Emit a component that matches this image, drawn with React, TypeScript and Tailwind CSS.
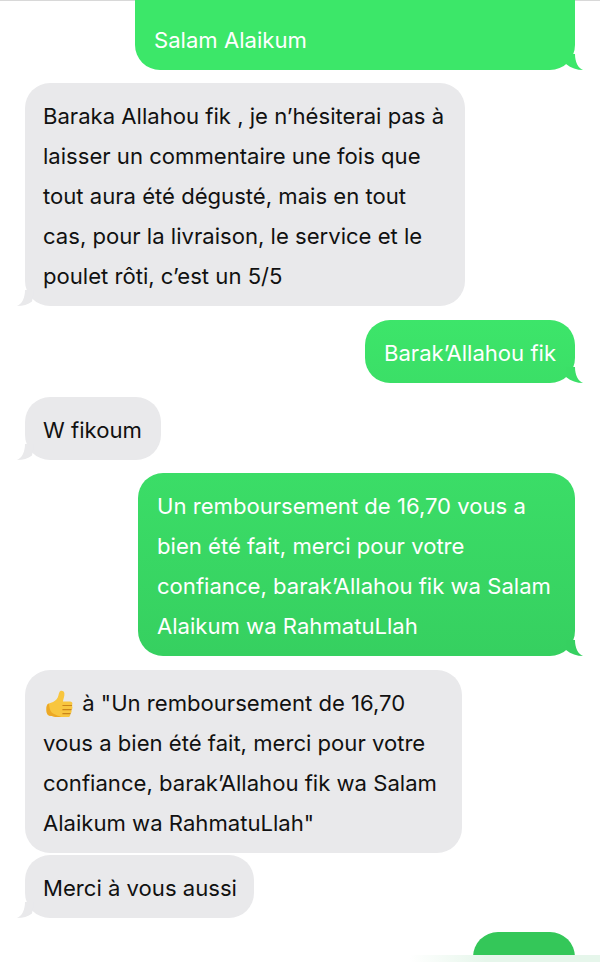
const font = { fontFamily: '"Inter", "Liberation Sans", sans-serif' }

function TailRight({ color }: { color: string }) {
  return (
    <svg className="absolute -right-[8px] bottom-0" width="20" height="16" viewBox="0 0 20 16">
      <path d="M12 0 C12 8 15 14 20 16 C14 16 8 14 3 10 L3 0 Z" fill={color} />
    </svg>
  )
}

function TailLeft() {
  return (
    <svg className="absolute -left-[8px] bottom-0" width="20" height="16" viewBox="0 0 20 16">
      <path d="M8 0 C8 8 5 14 0 16 C6 16 11 14.500 15 11.500 L17 0 Z" fill="#e9e9eb" />
    </svg>
  )
}

function Thumb() {
  return (
    <span className="inline-block w-[32px] h-[30px] ml-[1px] align-[-7px]">
      <svg width="31" height="33" viewBox="0 0 32 32">
        <path
          d="M5 15 C8 14 11 13 13 10.500 C15 8 15 5 16 3 C17 1 20.500 1.500 21 4 C21.500 7 20 10 19.500 13 L27 13 C29.500 13 30 16 28.500 17 C30 18.500 29.500 21 28 21.500 C29 23 28.500 25 27 25.500 C27.500 27.500 26.500 29 24.500 29 L14 29 C11 29 9 27.500 6 27.500 C3.500 27.500 2.500 25 2.500 21 C2.500 18 3 15.500 5 15 Z"
          fill="#f8c63f"
        />
        <path d="M5 15 C3 15.500 2.500 18 2.500 21 C2.500 25 3.500 27.500 6 27.500 C9 27.500 11 29 14 29 L18 29 C13 27 8 26 6.500 22 C5.500 19.500 5.500 17 5 15 Z" fill="#eca826" />
        <path d="M19.500 17 H28.500 M19.500 21.300 H28 M19.500 25.500 H27" stroke="#c9851a" strokeWidth="1.200" fill="none" strokeLinecap="round" />
      </svg>
    </span>
  )
}

type BubbleProps = {
  lines: React.ReactNode[]
  width: string
  tail?: boolean
  color?: string
  className?: string
}

function Sent({ lines, width, color = '#3bdf68', className = '' }: BubbleProps) {
  return (
    <div className={`relative self-end rounded-[25px] pt-[12.500px] pb-[10.500px] pl-[19px] text-white ${width} ${className}`}>
      <TailRight color={color} />
      {lines.map((l, i) => (
        <div key={i} className="relative whitespace-nowrap h-[40px] leading-[40px]">{l}</div>
      ))}
    </div>
  )
}

function Received({ lines, width, tail = true, className = '' }: BubbleProps) {
  return (
    <div className={`relative self-start rounded-[25px] bg-[#e9e9eb] pt-[12.500px] pb-[10.500px] pl-[18px] text-[#111111] ${width} ${className}`}>
      {tail && <TailLeft />}
      {lines.map((l, i) => (
        <div key={i} className="relative whitespace-nowrap h-[40px] leading-[40px]">{l}</div>
      ))}
    </div>
  )
}

export default function App() {
  return (
    <div className="relative w-[600px] h-[962px] overflow-hidden bg-white text-[22.100px] px-[25px] flex flex-col" style={font}>
      <div className="absolute top-0 left-0 right-0 h-px bg-[#d8d8d8]" />
      <Sent
        width="w-[440px] !pt-[20px] !pb-[10px] !rounded-t-none"
        className="bg-[#3ce769]"
        color="#3ce769"
        lines={['Salam Alaikum']}
      />
      <Received
        width="w-[440px] mt-[13px]"
        lines={[
          'Baraka Allahou fik , je n’hésiterai pas à',
          'laisser un commentaire une fois que',
          'tout aura été dégusté, mais en tout',
          'cas, pour la livraison, le service et le',
          'poulet rôti, c’est un 5/5',
        ]}
      />
      <Sent
        width="w-[210px] mt-[14px]"
        className="bg-gradient-to-b from-[#3de56a] to-[#3bdf67]"
        color="#3bdf67"
        lines={['Barak’Allahou fik']}
      />
      <Received width="w-[136px] mt-[14px]" lines={['W fikoum']} />
      <Sent
        width="w-[437px] mt-[13px]"
        className="bg-gradient-to-b from-[#3bdd67] to-[#36d060]"
        color="#36d060"
        lines={[
          'Un remboursement de 16,70 vous a',
          'bien été fait, merci pour votre',
          'confiance, barak’Allahou fik wa Salam',
          'Alaikum wa RahmatuLlah',
        ]}
      />
      <Received
        width="w-[437px] mt-[14px]"
        tail={false}
        lines={[
          <><Thumb /> à "Un remboursement de 16,70</>,
          'vous a bien été fait, merci pour votre',
          'confiance, barak’Allahou fik wa Salam',
          'Alaikum wa RahmatuLlah"',
        ]}
      />
      <Received width="w-[229px] mt-[2px]" lines={['Merci à vous aussi']} />
      <div className="self-end mt-[14px] w-[102px] h-[40px] rounded-t-[25px] bg-[#34c759] shrink-0" />
      {/* fade bar at the very bottom */}
      <div className="absolute left-[410px] right-0 bottom-0 h-[7px] bg-gradient-to-r from-white to-[#e6f6eb] to-40%" />
    </div>
  )
}
